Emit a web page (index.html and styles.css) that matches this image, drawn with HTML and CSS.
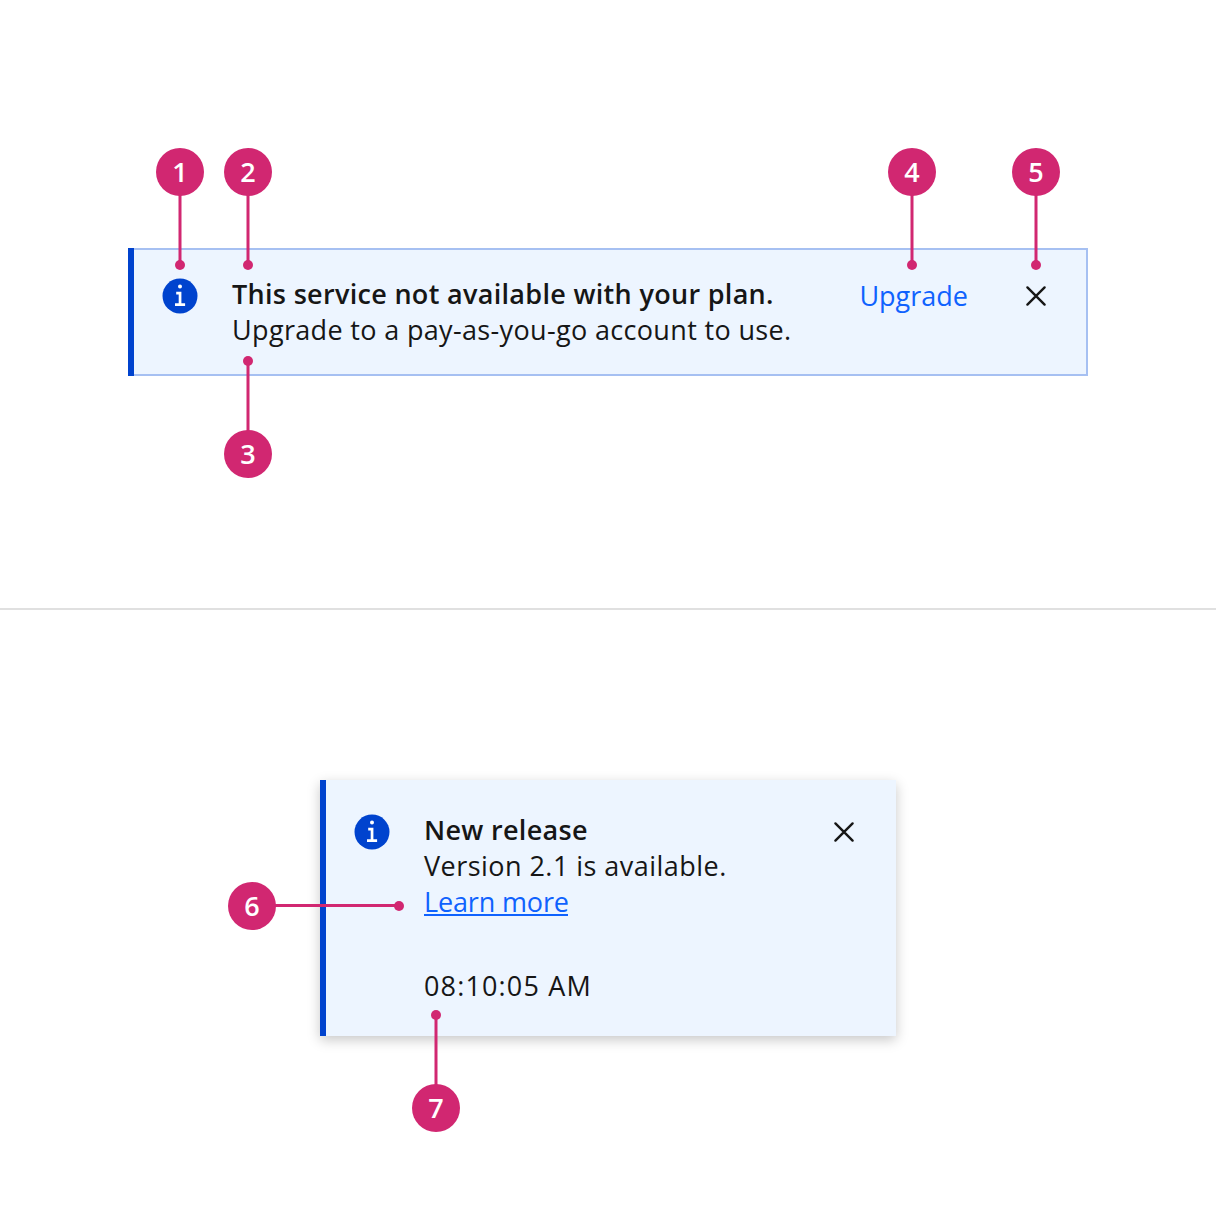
FILE: index.html
```
<!DOCTYPE html>
<html lang="en">
<head>
<meta charset="utf-8">
<title>Notification anatomy</title>
<link rel="stylesheet" href="styles.css">
</head>
<body>
<svg class="sprite" width="0" height="0" aria-hidden="true">
  <symbol id="info" viewBox="0 0 40 40">
    <circle class="info-disc" cx="20" cy="20" r="17.5"/>
    <circle cx="20" cy="10.6" r="2"/>
    <path d="M16.2 15.7h5.2v11.5h3.7v2.7H15v-2.7h3.7v-8.8h-2.5z"/>
  </symbol>
  <symbol id="close" viewBox="0 0 40 40">
    <path d="M11.4 11.4l17.2 17.2M28.6 11.4L11.4 28.6"/>
  </symbol>
</svg>
<main class="anatomy">
  <section class="panel">
    <div class="notification inline">
      <svg class="icon info"><use href="#info"/></svg>
      <div class="text">
        <h2 class="title inline-title">This service not available with your plan.</h2>
        <p class="body inline-body">Upgrade to a pay-as-you-go account to use.</p>
      </div>
      <a class="action">Upgrade</a>
      <svg class="icon close"><use href="#close"/></svg>
    </div>
    <div class="callout down c1"><b>1</b></div>
    <div class="callout down c2"><b>2</b></div>
    <div class="callout up c3"><b>3</b></div>
    <div class="callout down c4"><b>4</b></div>
    <div class="callout down c5"><b>5</b></div>
  </section>
  <section class="panel toast-panel">
    <div class="notification toast">
      <svg class="icon info"><use href="#info"/></svg>
      <div class="text">
        <h2 class="title toast-title">New release</h2>
        <p class="body toast-body">Version 2.1 is available.</p>
        <p class="body"><a class="link">Learn more</a></p>
        <p class="body time">08:10:05 AM</p>
      </div>
      <svg class="icon close"><use href="#close"/></svg>
    </div>
    <div class="callout right c6"><b>6</b></div>
    <div class="callout up c7"><b>7</b></div>
  </section>
</main>
</body>
</html>
```
FILE: styles.css
```
* { box-sizing: border-box; }
body {
  margin: 0;
  background: #fff;
  color: #161616;
  font: 400 27px/36px "Open Sans", "Noto Sans", sans-serif;
}
.sprite { position: absolute; }
.anatomy { height: 1216px; overflow: hidden; }
.panel { position: relative; height: 608px; padding: 248px 128px 0; }
.toast-panel { border-top: 2px solid #e0e0e0; padding: 170px 320px 0; }
.notification {
  display: flex;
  align-items: flex-start;
  background: #edf5ff;
  border-left: 6px solid #0043ce;
  white-space: nowrap;
}
.inline {
  height: 128px;
  padding: 28px 32px 0 26px;
  box-shadow: inset 0 2px #a6c0f2, inset 0 -2px #a6c0f2, inset -2px 0 #a6c0f2;
}
.toast {
  height: 256px;
  padding: 32px 32px 0 26px;
  box-shadow: 0 4px 12px rgba(0, 0, 0, .22);
}
.icon { flex: none; width: 40px; height: 40px; }
.info { fill: #fff; }
.info-disc { fill: #0043ce; }
.close { fill: none; stroke: #161616; stroke-width: 2.4; stroke-linecap: round; }
.text { flex: 1; margin-left: 32px; }
.title, .body { margin: 0; font-size: 27px; line-height: 36px; }
.title { font-weight: 600; }
.inline-title { letter-spacing: .31px; }
.inline-body { letter-spacing: .34px; }
.toast-title { letter-spacing: .32px; }
.toast-body { letter-spacing: .46px; }
.action { margin: 2px 48px 0 0; color: #0f62fe; }
.link {
  display: block;
  width: 144px;
  height: 32px;
  color: #0f62fe;
  border-bottom: 2px solid #0f62fe;
  letter-spacing: -.15px;
}
.toast .text { display: flex; flex-direction: column; }
.time { margin-top: 52px; letter-spacing: 1.15px; }

.callout { position: absolute; color: #d12771; }
.callout b {
  position: absolute;
  width: 48px;
  height: 48px;
  border-radius: 50%;
  background: #d12771;
  color: #fff;
  font-size: 27px;
  font-weight: 600;
  line-height: 48px;
  text-align: center;
}
.callout::before { content: ""; position: absolute; background: currentColor; }
.callout::after {
  content: "";
  position: absolute;
  width: 10px;
  height: 10px;
  border-radius: 50%;
  background: currentColor;
}
.down, .up { width: 48px; height: 122px; }
.down::before, .up::before {
  left: 22px;
  width: 4px;
  top: 5px;
  bottom: 5px;
  background: linear-gradient(90deg, #d1277180 1px, #d12771 1px 3px, #d1277180 3px);
}
.down::after { left: 19px; bottom: 0; }
.up::after { left: 19px; top: 0; }
.up b { bottom: 0; }
.right { width: 176px; height: 48px; }
.right::before { left: 40px; right: 5px; top: 22px; height: 3px; }
.right::after { right: 0; top: 19px; }
.c1 { left: 156px; top: 148px; }
.c2 { left: 224px; top: 148px; }
.c3 { left: 224px; top: 356px; }
.c4 { left: 888px; top: 148px; }
.c5 { left: 1012px; top: 148px; }
.c6 { left: 228px; top: 272px; }
.c7 { left: 412px; top: 400px; }
```
